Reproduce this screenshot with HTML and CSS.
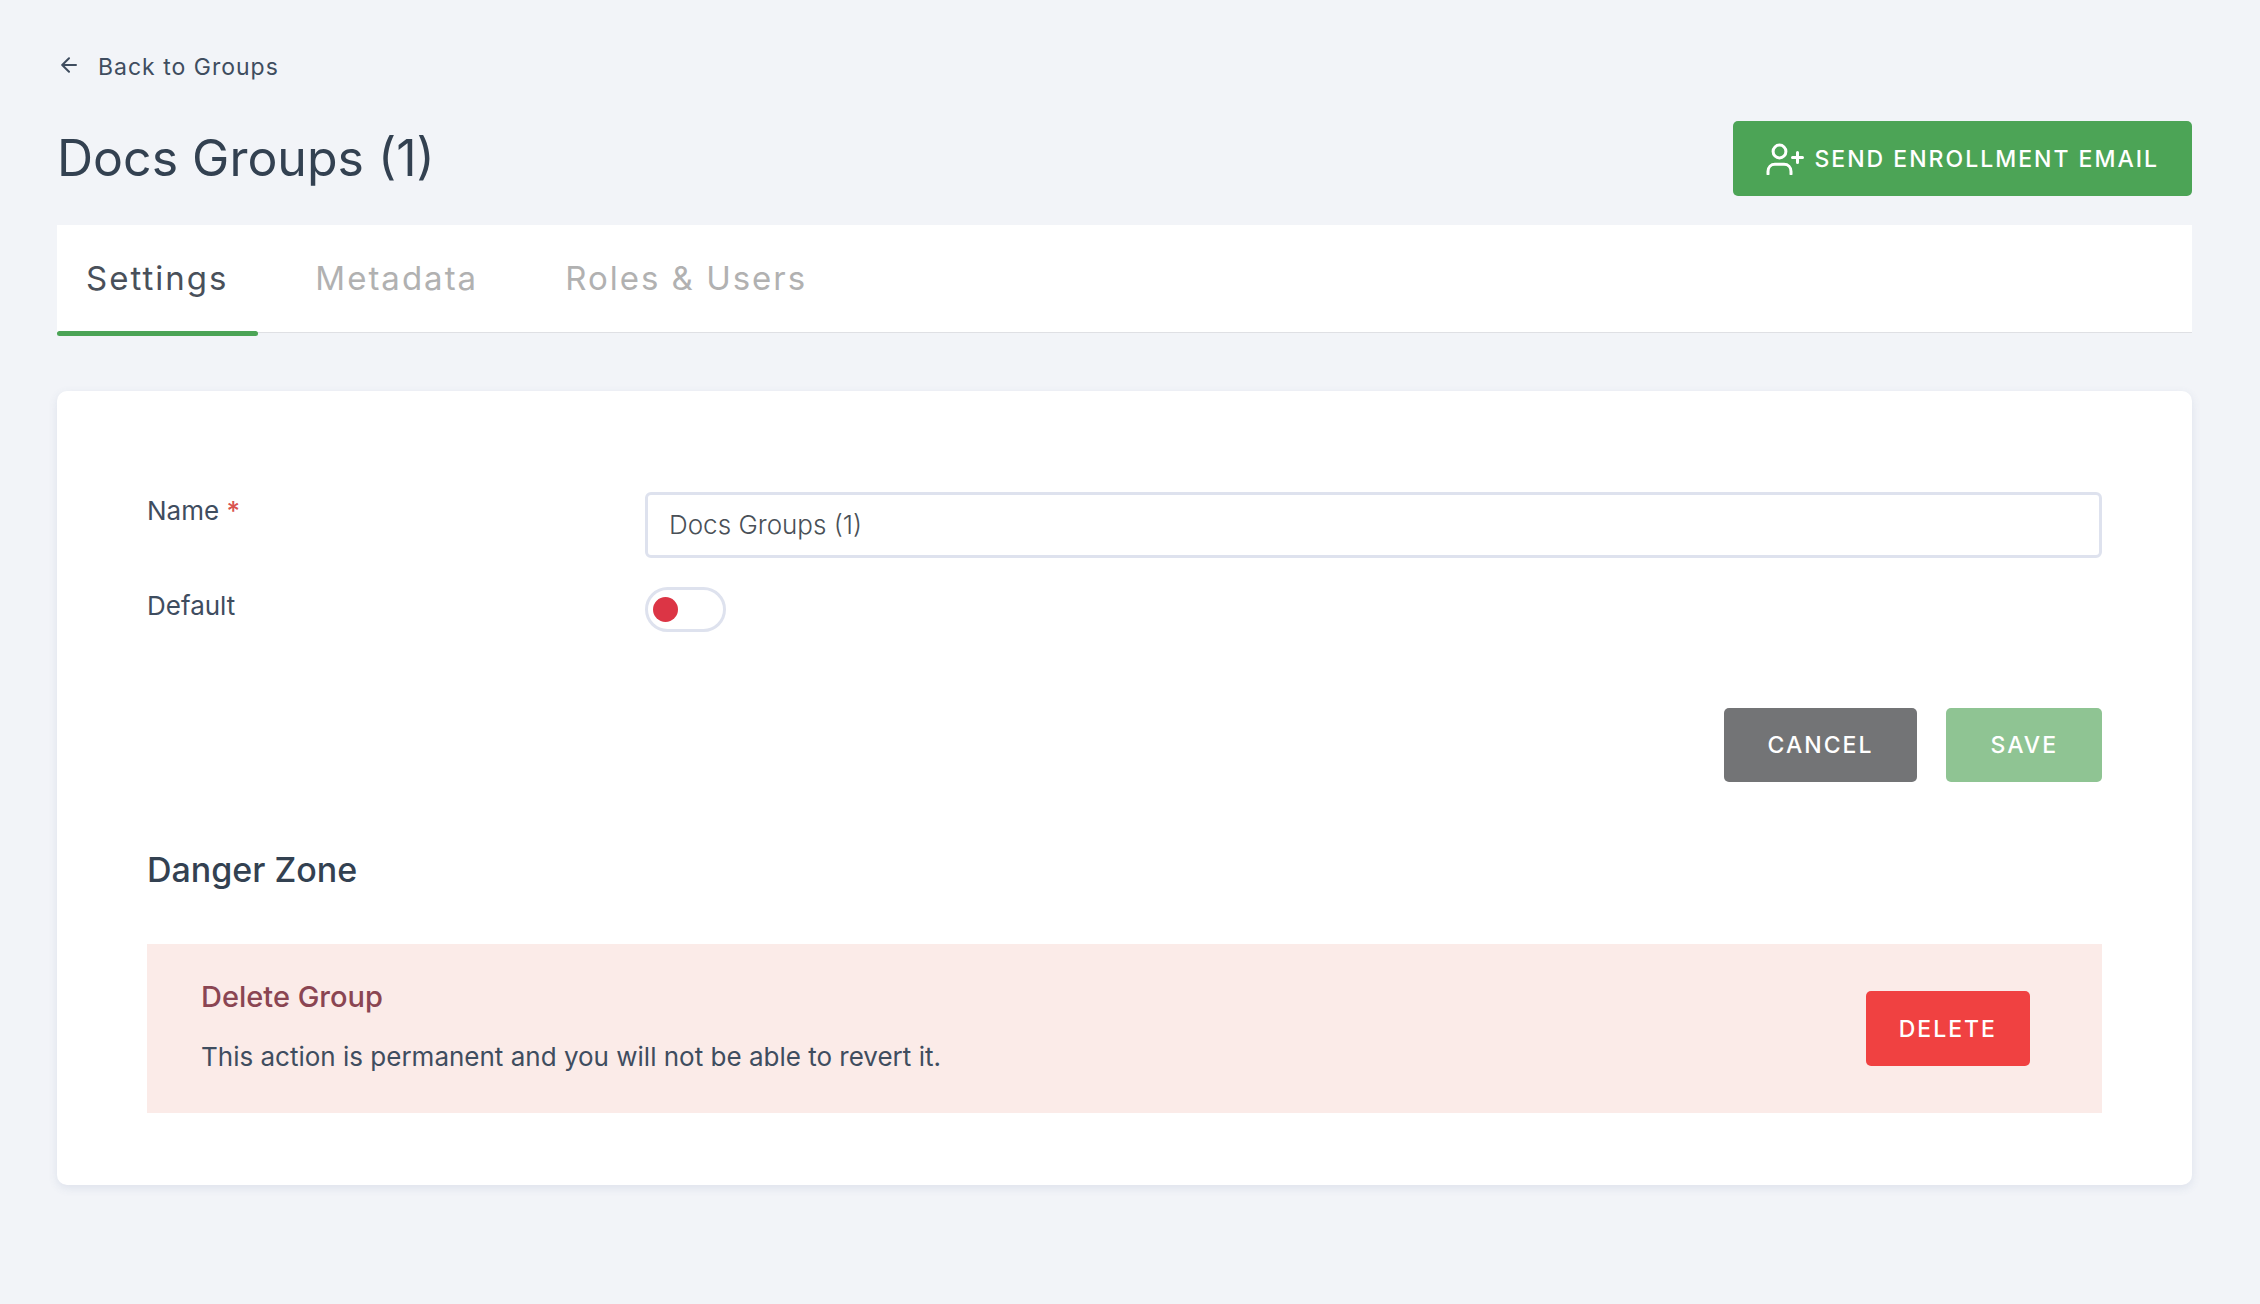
FILE: index.html
```html
<!DOCTYPE html>
<html lang="en">
<head>
  <meta charset="utf-8">
  <meta name="viewport" content="width=device-width, initial-scale=1">
  <title>Docs Groups (1)</title>
  <link rel="stylesheet" href="styles.css">
</head>
<body>
  <main class="page">
    <a class="back" href="#groups">
      <svg class="back-icon" viewBox="0 0 16 20" aria-hidden="true"><path d="M15 8H1.500M8 1.200L1.200 8L8 14.800"/></svg>
      Back to Groups
    </a>

    <header class="header">
      <h1 class="title">Docs Groups (1)</h1>
      <button class="btn btn-enroll" type="button">
        <svg class="enroll-icon" viewBox="0 0 38 32" aria-hidden="true">
          <circle cx="13.500" cy="8.500" r="6.400"/>
          <path d="M2 31V28.500C2 24 5 21.300 9 21.300H18C22 21.300 25 24 25 28.500V31M31.500 9.500V19.500M26.500 14.500H36.500"/>
        </svg>
        SEND ENROLLMENT EMAIL
      </button>
    </header>

    <nav class="tabs">
      <a class="tab active" href="#settings" aria-current="page">Settings</a>
      <a class="tab" href="#metadata">Metadata</a>
      <a class="tab" href="#roles">Roles &amp; Users</a>
    </nav>

    <section class="card">
      <form class="form">
        <div class="row">
          <label class="label" for="name">Name <span class="required">*</span></label>
          <input class="input" id="name" type="text" value="Docs Groups (1)" required>
        </div>
        <div class="row">
          <label class="label" for="default">Default</label>
          <input class="toggle" id="default" type="checkbox" role="switch">
        </div>
        <div class="actions">
          <button class="btn btn-cancel" type="button">CANCEL</button>
          <button class="btn btn-save" type="submit" disabled>SAVE</button>
        </div>
      </form>

      <h2 class="danger-heading">Danger Zone</h2>
      <div class="danger">
        <div class="danger-text">
          <h3 class="danger-title">Delete Group</h3>
          <p class="danger-note">This action is permanent and you will not be able to revert it.</p>
        </div>
        <button class="btn btn-delete" type="button">DELETE</button>
      </div>
    </section>
  </main>
</body>
</html>
```
FILE: styles.css
```css
* {
  box-sizing: border-box;
}

body {
  margin: 0;
  background: #f2f4f8;
  color: #3f4d5f;
  font-family: Inter, "Liberation Sans", sans-serif;
  font-size: 26px;
  line-height: 32px;
}

h1,
h2,
h3,
p {
  margin: 0;
}

.page {
  padding: 51px 68px 60px 57px;
}

.back {
  display: flex;
  align-items: center;
  width: fit-content;
  gap: 21px;
  padding-left: 4px;
  color: #3f4d5f;
  font-size: 23px;
  letter-spacing: 1px;
  text-decoration: none;
}

.back-icon {
  width: 16px;
  height: 20px;
  fill: none;
  stroke: currentColor;
  stroke-width: 2;
  stroke-linecap: round;
  stroke-linejoin: round;
}

.header {
  display: flex;
  align-items: center;
  justify-content: space-between;
  margin: 38px 0 29px;
}

.title {
  padding-bottom: 2px;
  color: #334151;
  font-size: 50px;
  font-weight: 400;
  line-height: 64px;
}

.btn {
  display: flex;
  align-items: center;
  justify-content: center;
  height: 75px;
  padding: 0 44px;
  border: 0;
  border-radius: 5px;
  color: #fff;
  font-family: inherit;
  font-size: 23px;
  font-weight: 500;
  letter-spacing: 2px;
}

.btn-enroll {
  gap: 10px;
  padding: 0 33px;
  background: #4ca456;
}

.enroll-icon {
  width: 38px;
  height: 32px;
  fill: none;
  stroke: currentColor;
  stroke-width: 3;
  stroke-linecap: round;
  stroke-linejoin: round;
}

.tabs {
  display: flex;
  gap: 28px;
  height: 108px;
  border-bottom: 1px solid #dfe0e4;
  background: #fff;
}

.tab {
  height: 111px;
  padding: 0 30px 0 29px;
  color: #b1b1b1;
  font-size: 33px;
  line-height: 106px;
  letter-spacing: 2px;
  text-decoration: none;
}

.tab.active {
  color: #49505a;
}

.tab.active::after {
  content: "";
  display: block;
  height: 5px;
  margin: 0 -30px 0 -29px;
  border-radius: 3px;
  background: #4ca456;
}

.card {
  margin-top: 58px;
  padding: 101px 90px 72px;
  border-radius: 10px;
  background: #fff;
  box-shadow: 0 3px 10px rgba(70, 100, 150, 0.12);
}

.form {
  display: grid;
  gap: 29px;
}

.row {
  display: grid;
  grid-template-columns: 498px 1fr;
  align-items: start;
}

.label {
  padding-top: 3px;
}

.required {
  color: #d9534f;
  font-weight: 500;
}

.input {
  width: 100%;
  height: 66px;
  padding: 0 22px 2px 21px;
  border: 3px solid #dee2ee;
  border-radius: 6px;
  background: #fff;
  color: #495057;
  font-family: inherit;
  font-size: 26px;
  font-weight: 300;
}

.toggle {
  display: flex;
  align-items: center;
  appearance: none;
  width: 81px;
  height: 45px;
  margin: 0;
  padding: 0 5px;
  border: 3px solid #dee2ee;
  border-radius: 23px;
  background: #fff;
}

.toggle::before {
  content: "";
  width: 25px;
  height: 25px;
  border-radius: 50%;
  background: #dc3545;
}

.toggle:checked {
  justify-content: flex-end;
}

.toggle:checked::before {
  background: #4ca456;
}

.actions {
  display: flex;
  justify-content: flex-end;
  gap: 29px;
  margin-top: 47px;
}

.actions .btn {
  height: 74px;
}

.btn-cancel {
  background: #737476;
}

.btn-save {
  background: #8fc493;
}

.danger-heading {
  margin: 66px 0 52px;
  color: #334151;
  font-size: 34px;
  font-weight: 500;
  line-height: 44px;
}

.danger {
  display: flex;
  align-items: center;
  justify-content: space-between;
  padding: 0 72px 0 54px;
  background: #fbebe8;
}

.danger-text {
  padding: 35px 0 40px;
}

.danger-title {
  margin-bottom: 26px;
  color: #8a4552;
  font-size: 29px;
  font-weight: 500;
  line-height: 36px;
}

.btn-delete {
  padding: 0 33px;
  background: #f04141;
}
```
